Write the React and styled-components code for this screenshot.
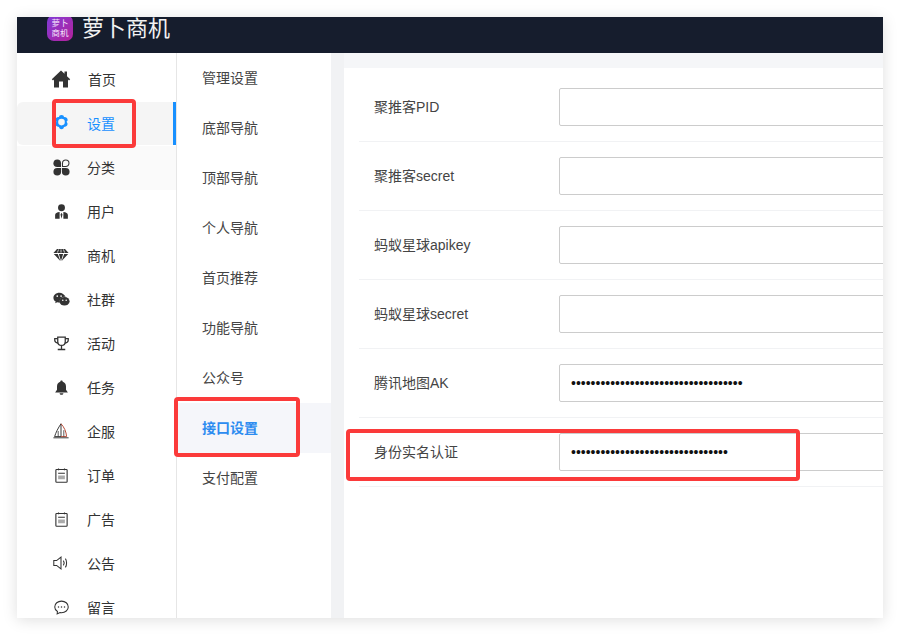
import React from 'react';
import styled, { createGlobalStyle } from 'styled-components';

const Global = createGlobalStyle`
  html, body {
    margin: 0;
    padding: 0;
    background: #fff;
    font-family: "Liberation Sans", "Noto Sans CJK SC", sans-serif;
    color: #333;
  }
  * { box-sizing: border-box; }
`;

const Page = styled.div`
  width: 900px;
  height: 635px;
  padding: 17px;
  overflow: hidden;
  position: relative;
`;

const Frame = styled.div`
  width: 866px;
  height: 601px;
  display: flex;
  flex-direction: column;
  overflow: hidden;
  box-shadow: 0 2px 14px rgba(0, 0, 0, 0.13);
`;

const Header = styled.header`
  height: 36px;
  flex: none;
  background: #161d2d;
  display: flex;
  align-items: flex-end;
  gap: 10px;
  padding: 0 0 12px 30px;
  overflow: hidden;
`;

const Logo = styled.div`
  width: 26px;
  height: 26px;
  flex: none;
  border-radius: 7px;
  background: linear-gradient(135deg, #7f3bd8, #b5229c);
  color: #f6e4fb;
  font-size: 8.5px;
  line-height: 10px;
  text-align: center;
  padding-top: 3px;
`;

const Brand = styled.div`
  color: #f2f2f2;
  font-size: 22px;
  line-height: 24px;
  margin-left: -1px;
`;

const Body = styled.div`
  flex: 1;
  display: flex;
  min-height: 0;
`;

const Sidebar = styled.nav`
  width: 160px;
  flex: none;
  padding-top: 5px;
  border-right: 1px solid #e6e6e6;
  overflow: hidden;
`;

const MenuItem = styled.div`
  display: flex;
  align-items: center;
  gap: ${(p) => (p.$wide ? '17px' : '16px')};
  padding: 0 0 2px 34px;
  font-size: 14px;
  position: relative;
  color: ${(p) => (p.$active ? '#1890ff' : '#333')};
  background: ${(p) => (p.$active ? '#f5f5f5' : p.$hover ? '#fafafa' : 'transparent')};
  border-radius: ${(p) => (p.$active ? '6px 0 0 6px' : '0')};
  margin-bottom: ${(p) => (p.$active ? '1px' : '0')};
  height: ${(p) => (p.$active ? '43px' : '44px')};

  &::after {
    content: '';
    display: ${(p) => (p.$active ? 'block' : 'none')};
    position: absolute;
    right: 0;
    top: 0;
    bottom: 0;
    width: 3px;
    background: #1890ff;
  }
`;

const IconBox = styled.span`
  width: 20px;
  height: 20px;
  flex: none;
  display: flex;
  align-items: center;
  justify-content: center;
  color: ${(p) => (p.$active ? '#1890ff' : '#333')};
`;

const SubMenu = styled.nav`
  width: 154px;
  flex: none;
  background: #fff;
`;

const SubItem = styled.div`
  height: 50px;
  display: flex;
  align-items: center;
  padding: 0 0 2px 25px;
  font-size: 14px;
  font-weight: ${(p) => (p.$active ? 700 : 400)};
  color: ${(p) => (p.$active ? '#2d8cf0' : '#444')};
  background: ${(p) => (p.$active ? '#f5f6fa' : 'transparent')};
`;

const Main = styled.main`
  flex: 1;
  min-width: 0;
  padding-top: 15px;
  background: #f5f6f8;
  border-left: 13px solid #f1f2f4;
  display: flex;
`;

const Card = styled.section`
  flex: 1;
  min-width: 0;
  background: #fff;
  padding: 5px 0 0 15px;
  overflow: hidden;
`;

const FormRow = styled.div`
  display: flex;
  align-items: center;
  padding: 15px 0 15px 15px;
  border-bottom: 1px solid #f1f2f4;
`;

const FieldLabel = styled.label`
  width: 185px;
  flex: none;
  padding-bottom: 2px;
  font-size: 14px;
  color: #444;
`;

const Field = styled.input`
  width: 500px;
  height: 38px;
  flex: none;
  padding: 0 11px;
  border: 1px solid #ccc;
  border-radius: 2px;
  background: #fff;
  color: #111;
  font-size: 14px;
  font-family: inherit;
  outline: none;
`;

const Mark = styled.div`
  position: absolute;
  left: ${(p) => p.$x}px;
  top: ${(p) => p.$y}px;
  width: ${(p) => p.$w}px;
  height: ${(p) => p.$h}px;
  border: 4px solid #fb3a3a;
  border-radius: 4px;
  pointer-events: none;
`;

const Svg = ({ size = 16, children }) => (
  <svg width={size} height={size} viewBox="0 0 20 20" fill="currentColor">
    {children}
  </svg>
);

const HomeIcon = () => (
  <Svg size={20}>
    <path d="M10 1.500 0.800 10.200 2 11.500 3 10.600V18.500H8V12.500H12V18.500H17V10.600L18 11.500 19.200 10.200 16 7.200V2.500H13.500V4.800Z" />
  </Svg>
);

const GearIcon = () => (
  <Svg size={17}>
    <path
      fillRule="evenodd"
      d="M7.800 1.800C9 .8 11 .8 12.200 1.800L13 3.600 15 3.800C16.500 4.300 17.500 6 17.200 7.600L16 9.100 17 10.900C17.500 12.400 16.500 14.200 15 14.800L13 15.200 12.200 17.200C11 18.200 9 18.200 7.800 17.200L7 15.200 5 14.800C3.500 14.200 2.500 12.400 3 10.900L4 9.100 2.800 7.600C2.500 6 3.500 4.300 5 3.800L7 3.600ZM10 5.600A3.900 3.900 0 1 0 10 13.400 3.900 3.900 0 0 0 10 5.600Z"
    />
  </Svg>
);

const CategoryIcon = () => (
  <Svg size={17}>
    <path d="M5 .5A4.500 4.500 0 0 1 9.500 5V9.500H5A4.500 4.500 0 0 1 5 .5Z" />
    <path
      d="M15 1.200A3.800 3.800 0 0 1 15 8.800H11.200V5A3.800 3.800 0 0 1 15 1.200Z"
      fill="none"
      stroke="currentColor"
      strokeWidth="1.200"
    />
    <path d="M5 19.500A4.500 4.500 0 0 1 5 10.500H9.500V15A4.500 4.500 0 0 1 5 19.500Z" />
    <path d="M15 19.500A4.500 4.500 0 0 1 10.500 15V10.500H15A4.500 4.500 0 0 1 15 19.500Z" />
  </Svg>
);

const UserIcon = () => (
  <Svg size={15}>
    <circle cx="10" cy="5" r="4.600" />
    <path d="M1.500 19.500V14.500C1.500 12 4 10.800 7.500 10.500V19.500ZM12.500 10.500C16 10.800 18.500 12 18.500 14.500V19.500H12.500ZM10 11.500 11.300 14 10 19.500 8.700 14Z" />
  </Svg>
);

const GemIcon = () => (
  <Svg size={16}>
    <path d="M5 2.500H15L19.500 7.500H.5ZM1 8.700H6L9.200 17.500ZM7.300 8.700H12.700L10 17.500ZM14 8.700H19L10.800 17.500Z" />
    <path d="M7 3 5.500 7M13 3 14.500 7M10 3V7" stroke="#fff" strokeWidth="0.900" />
  </Svg>
);

const WechatIcon = () => (
  <Svg size={17}>
    <path d="M7.500 2C3.600 2 .5 4.600.5 7.800c0 1.900 1 3.500 2.700 4.600l-.7 2.100 2.500-1.300c.8.2 1.600.3 2.500.3h.6a5 5 0 0 1-.2-1.400c0-3 2.800-5.400 6.400-5.400h.6C13.300 4 10.700 2 7.500 2Z" />
    <ellipse cx="13.500" cy="12" rx="6" ry="5" />
    <circle cx="5" cy="6" r="1" fill="#fff" />
    <circle cx="9.500" cy="6" r="1" fill="#fff" />
    <circle cx="11.500" cy="11" r="0.900" fill="#fff" />
    <circle cx="15.500" cy="11" r="0.900" fill="#fff" />
  </Svg>
);

const TrophyIcon = () => (
  <Svg size={15}>
    <g fill="none" stroke="currentColor" strokeWidth="1.700">
      <path d="M5 1.500H15V7.500C15 10.500 13 12.500 10 12.500 7 12.500 5 10.500 5 7.500Z" />
      <path d="M5 3.500H1V5.500C1 7.500 3 9 5.500 9.500M15 3.500H19V5.500C19 7.500 17 9 14.500 9.500" />
      <path d="M10 12.500V17.500M5 18H15" />
    </g>
  </Svg>
);

const BellIcon = () => (
  <Svg size={15}>
    <path d="M10 .5C11 .5 11.600 1.200 11.600 2.200 14.500 3 16 5.500 16 8.500V13L18.500 16.500H1.500L4 13V8.500C4 5.500 5.500 3 8.400 2.200 8.400 1.200 9 .5 10 .5ZM7.500 17.500H12.500C12.500 18.800 11.400 19.700 10 19.700S7.500 18.800 7.500 17.500Z" />
  </Svg>
);

const SailIcon = () => (
  <Svg size={16}>
    <g fill="none" stroke="currentColor" strokeWidth="1.200">
      <path d="M10 1V17" />
      <path d="M10 1C6.500 6 3.500 12 2 17H10" />
      <path d="M10 1C14 5 16.500 11 17 17H10" stroke="#b5442f" />
      <path d="M6.500 17V10M13.500 17V9" strokeWidth="1" />
      <path d="M.5 18.500H19.500" />
    </g>
  </Svg>
);

const NoteIcon = () => (
  <Svg size={15}>
    <g fill="none" stroke="currentColor" strokeWidth="1.500">
      <rect x="2.500" y="2" width="15" height="17" rx="1" />
      <path d="M6 .5V3M14 .5V3M5.500 7H14.500" />
    </g>
    <rect x="5.500" y="10" width="9" height="5" fill="#aaa" />
  </Svg>
);

const SpeakerIcon = () => (
  <Svg size={16}>
    <g fill="none" stroke="currentColor" strokeWidth="1.300">
      <path d="M1 7V13H4.500L10 17.500V2.500L4.500 7Z" />
      <path d="M13 7C14 8.500 14 11.500 13 13M15.500 4.500C17.500 7.500 17.500 12.500 15.500 15.500" />
    </g>
  </Svg>
);

const CommentIcon = () => (
  <Svg size={15}>
    <path
      d="M10 1.500C5 1.500 1 4.800 1 9.200 1 11.800 2.400 14 4.600 15.400L4.200 18.500 8 16.700C8.600 16.800 9.300 16.900 10 16.900 15 16.900 19 13.500 19 9.200 19 4.800 15 1.500 10 1.500Z"
      fill="none"
      stroke="currentColor"
      strokeWidth="1.400"
    />
    <circle cx="6" cy="9.200" r="1" />
    <circle cx="10" cy="9.200" r="1" />
    <circle cx="14" cy="9.200" r="1" />
  </Svg>
);

const menu = [
  { label: '首页', icon: <HomeIcon />, wide: true },
  { label: '设置', icon: <GearIcon />, active: true },
  { label: '分类', icon: <CategoryIcon />, hover: true },
  { label: '用户', icon: <UserIcon /> },
  { label: '商机', icon: <GemIcon /> },
  { label: '社群', icon: <WechatIcon /> },
  { label: '活动', icon: <TrophyIcon /> },
  { label: '任务', icon: <BellIcon /> },
  { label: '企服', icon: <SailIcon /> },
  { label: '订单', icon: <NoteIcon /> },
  { label: '广告', icon: <NoteIcon /> },
  { label: '公告', icon: <SpeakerIcon /> },
  { label: '留言', icon: <CommentIcon /> },
];

const subMenu = ['管理设置', '底部导航', '顶部导航', '个人导航', '首页推荐', '功能导航', '公众号', '接口设置', '支付配置'];

const fields = [
  { label: '聚推客PID', value: '' },
  { label: '聚推客secret', value: '' },
  { label: '蚂蚁星球apikey', value: '' },
  { label: '蚂蚁星球secret', value: '' },
  { label: '腾讯地图AK', value: 'x'.repeat(35) },
  { label: '身份实名认证', value: 'x'.repeat(32) },
];

const App = () => {
  return (
    <Page>
      <Global />
      <Frame>
        <Header>
          <Logo>
            萝卜
            <br />
            商机
          </Logo>
          <Brand>萝卜商机</Brand>
        </Header>
        <Body>
          <Sidebar>
            {menu.map((item) => (
              <MenuItem key={item.label} $active={item.active} $hover={item.hover} $wide={item.wide}>
                <IconBox $active={item.active}>{item.icon}</IconBox>
                {item.label}
              </MenuItem>
            ))}
          </Sidebar>
          <SubMenu>
            {subMenu.map((name) => (
              <SubItem key={name} $active={name === '接口设置'}>
                {name}
              </SubItem>
            ))}
          </SubMenu>
          <Main>
            <Card>
              {fields.map((field) => (
                <FormRow key={field.label}>
                  <FieldLabel>{field.label}</FieldLabel>
                  <Field type="password" value={field.value} readOnly />
                </FormRow>
              ))}
            </Card>
          </Main>
        </Body>
      </Frame>
      <Mark $x={52} $y={99} $w={84} $h={49} />
      <Mark $x={174} $y={397} $w={126} $h={60} />
      <Mark $x={346} $y={429} $w={454} $h={52} />
    </Page>
  );
};

export default App;
